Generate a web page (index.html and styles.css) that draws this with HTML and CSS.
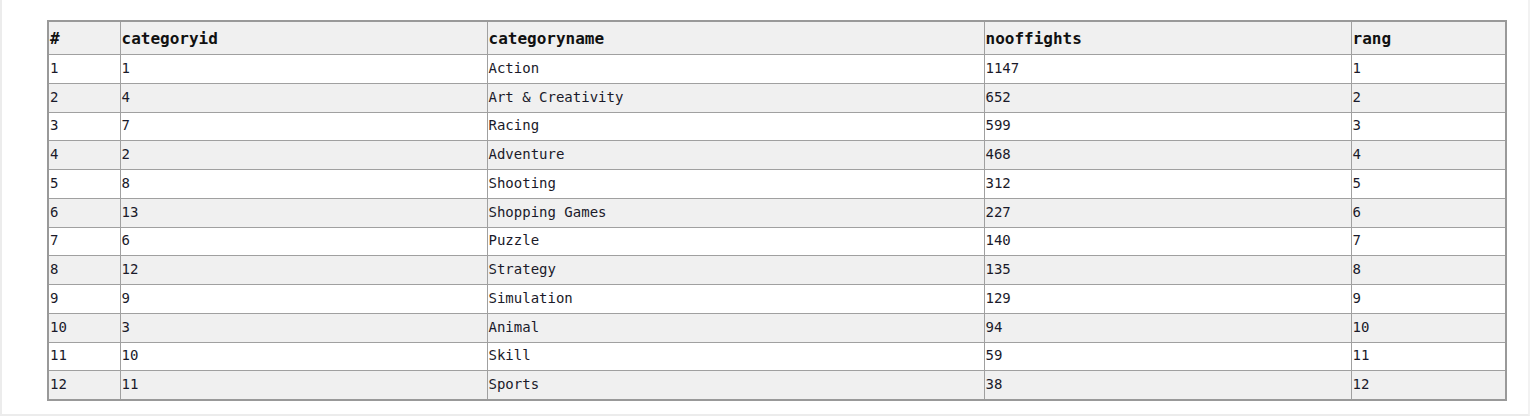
FILE: index.html
```html
<!DOCTYPE html>
<html>
<head>
<meta charset="utf-8">
<link rel="stylesheet" href="styles.css">
</head>
<body>
<div class="frame">
<table class="grid">
<colgroup>
<col class="c1"><col class="c2"><col class="c3"><col class="c4"><col class="c5">
</colgroup>
<thead>
<tr><th>#</th><th>categoryid</th><th>categoryname</th><th>nooffights</th><th>rang</th></tr>
</thead>
<tbody>
<tr><td>1</td><td>1</td><td>Action</td><td>1147</td><td>1</td></tr>
<tr><td>2</td><td>4</td><td>Art &amp; Creativity</td><td>652</td><td>2</td></tr>
<tr><td>3</td><td>7</td><td>Racing</td><td>599</td><td>3</td></tr>
<tr><td>4</td><td>2</td><td>Adventure</td><td>468</td><td>4</td></tr>
<tr><td>5</td><td>8</td><td>Shooting</td><td>312</td><td>5</td></tr>
<tr><td>6</td><td>13</td><td>Shopping Games</td><td>227</td><td>6</td></tr>
<tr><td>7</td><td>6</td><td>Puzzle</td><td>140</td><td>7</td></tr>
<tr><td>8</td><td>12</td><td>Strategy</td><td>135</td><td>8</td></tr>
<tr><td>9</td><td>9</td><td>Simulation</td><td>129</td><td>9</td></tr>
<tr><td>10</td><td>3</td><td>Animal</td><td>94</td><td>10</td></tr>
<tr><td>11</td><td>10</td><td>Skill</td><td>59</td><td>11</td></tr>
<tr><td>12</td><td>11</td><td>Sports</td><td>38</td><td>12</td></tr>
</tbody>
</table>
</div>
</body>
</html>
```
FILE: styles.css
```css
html, body {
  margin: 0;
  padding: 0;
  background: #ffffff;
}
.frame {
  box-sizing: border-box;
  width: 1530px;
  height: 416px;
  border-left: 2px solid #ececec;
  border-right: 2px solid #f2f2f2;
  border-bottom: 2px solid #ececec;
  padding: 20px 0 0 45px;
}
.grid {
  width: 1458px;
  border-collapse: collapse;
  border: 2px solid #999999;
  font-family: "DejaVu Sans Mono", monospace;
  color: #1a1a2a;
  table-layout: fixed;
}
.c1 { width: 72px; }
.c2 { width: 367px; }
.c3 { width: 497px; }
.c4 { width: 367px; }
.c5 { width: 155px; }
.grid th, .grid td {
  border: 1px solid #a0a0a0;
  text-align: left;
  padding: 0 1px;
  vertical-align: middle;
}
.grid th {
  font-size: 16px;
  font-weight: bold;
  height: 32px;
  background: #f0f0f0;
  color: #111;
}
.grid td {
  font-size: 14px;
  height: 25.75px;
  padding-bottom: 2px;
}
.grid tbody tr:nth-child(even) td {
  background: #f0f0f0;
}
```
